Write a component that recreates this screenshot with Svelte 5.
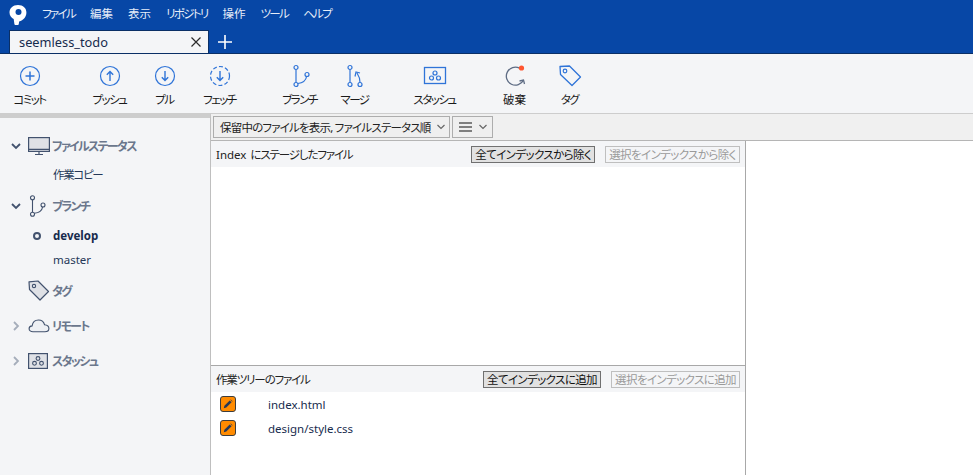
<script>
  const menus = ['ファイル', '編集', '表示', 'リポジトリ', '操作', 'ツール', 'ヘルプ'];
  const groups = [
    [{ id: 'commit', label: 'コミット' }],
    [{ id: 'push', label: 'プッシュ' }, { id: 'pull', label: 'プル' }, { id: 'fetch', label: 'フェッチ' }],
    [{ id: 'branch', label: 'ブランチ' }, { id: 'merge', label: 'マージ' }],
    [{ id: 'stash', label: 'スタッシュ' }],
    [{ id: 'discard', label: '破棄' }, { id: 'tag', label: 'タグ' }]
  ];
  const files = ['index.html', 'design/style.css'];
  // katakana labels are set tighter than the kanji ones
  const isKana = (s) => /[\u30A0-\u30FF]/.test(s);
</script>

<div class="app">
  <header class="top">
    <div class="menubar">
      <svg class="logo" width="20" height="22" viewBox="0 0 20 22">
        <path d="M10 1C4.800 1 1.500 4.200 1.500 8.600c0 3.200 2 5.400 4.200 6.400l.7 5c.1.8.6 1 1.300 1h1.800c.7-.1 1.200-.4 1.300-1.100l.3-2.300c4.300-1.300 7.300-4.500 7.300-9C18.500 4.200 15.200 1 10 1z" fill="#fff" />
        <circle cx="10.500" cy="8" r="3" fill="#0747a6" />
      </svg>
      {#each menus as m}
        <span class="menu" class:kana={isKana(m)}>{m}</span>
      {/each}
    </div>
    <div class="tabbar">
      <div class="tab">
        <span>seemless_todo</span>
        <svg width="10" height="10" viewBox="0 0 10 10"><path d="M.5.500l9 9M9.500.500l-9 9" stroke="#2b2b2b" stroke-width="1.200" fill="none" /></svg>
      </div>
      <svg class="plus" width="14" height="14" viewBox="0 0 14 14"><path d="M7 0v14M0 7h14" stroke="#fff" stroke-width="1.600" /></svg>
    </div>
  </header>

  <nav class="toolbar">
    {#each groups as group}
      <div class="group">
        {#each group as item}
          <div class="tool">
            <svg width="24" height="24" viewBox="0 0 24 24" fill="none" stroke="#2f74d8" stroke-width="1.200">
              {#if item.id === 'commit'}
                <circle cx="12" cy="12" r="9.500" />
                <path d="M12 7.500v9M7.500 12h9" stroke-width="1.500" />
              {:else if item.id === 'push'}
                <circle cx="12" cy="12" r="9.500" />
                <path d="M12 17V7.500M8.800 10.800L12 7.500l3.200 3.300" stroke-width="1.400" />
              {:else if item.id === 'pull'}
                <circle cx="12" cy="12" r="9.500" />
                <path d="M12 7v9.500M8.800 13.200l3.200 3.300 3.200-3.300" stroke-width="1.400" />
              {:else if item.id === 'fetch'}
                <circle cx="12" cy="12" r="9.500" stroke-dasharray="4 2.200" />
                <path d="M12 7v9.500M8.800 13.200l3.200 3.300 3.200-3.300" stroke-width="1.400" />
              {:else if item.id === 'branch'}
                <circle cx="8" cy="3.500" r="2" />
                <circle cx="8" cy="20.500" r="2" />
                <circle cx="19" cy="10.500" r="2" />
                <path d="M8 5.500v13M9.800 19.500c5-.5 8.200-3.500 8.800-7" />
              {:else if item.id === 'merge'}
                <circle cx="7" cy="3.500" r="2" />
                <circle cx="7" cy="20.500" r="2" />
                <circle cx="17" cy="20.500" r="2" />
                <path d="M7 5.500v13M17 18.500c0-4-1-6.500-3-9.500M12 12.500l1-4.500 4 1" />
              {:else if item.id === 'stash'}
                <rect x="1.500" y="3.500" width="21" height="16" stroke-width="1.300" />
                <circle cx="12" cy="9" r="2" />
                <circle cx="8.500" cy="14" r="2" />
                <circle cx="15.500" cy="14" r="2" />
              {:else if item.id === 'discard'}
                <path d="M16.500 4.200A9 9 0 1 0 20.500 16" stroke="#5e6c84" stroke-width="1.300" />
                <path d="M16.500 17l4-1 1 4" stroke="#5e6c84" stroke-width="1.300" />
                <circle cx="18.500" cy="4" r="2.600" fill="#ff5630" stroke="none" />
              {:else if item.id === 'tag'}
                <path d="M2 2.500l9.500-.5 11 11-8.500 8.500-11.500-11z" stroke-width="1.300" stroke-linejoin="round" />
                <circle cx="7" cy="7" r="1.800" />
              {/if}
            </svg>
            <span class:kana={isKana(item.label)}>{item.label}</span>
          </div>
        {/each}
      </div>
    {/each}
  </nav>

  <div class="body">
    <aside class="sidebar">
      <div class="row head">
        <svg class="chev" width="10" height="10" viewBox="0 0 10 10"><path d="M1 3l4 4 4-4" /></svg>
        <svg class="ico" width="22" height="20" viewBox="0 0 22 20" fill="#dfe1e6" stroke="#42526e" stroke-width="1.200">
          <rect x=".6" y="1.600" width="20.800" height="13.800" />
          <path d="M.6 13.400h20.800M7 18.500h8M11 15.500v3" fill="none" />
        </svg>
        <span>ファイルステータス</span>
      </div>
      <div class="row sub first">作業コピー</div>

      <div class="row head">
        <svg class="chev" width="10" height="10" viewBox="0 0 10 10"><path d="M1 3l4 4 4-4" /></svg>
        <svg class="ico" width="22" height="22" viewBox="0 0 22 22" fill="none" stroke="#42526e" stroke-width="1.100">
          <circle cx="4.500" cy="2.800" r="2" />
          <circle cx="4.500" cy="19.200" r="2" />
          <circle cx="15" cy="10" r="2" />
          <path d="M4.500 4.800v12.400M6.300 18.300c4.500-.5 7.800-3 8.300-6.300" />
        </svg>
        <span>ブランチ</span>
      </div>
      <div class="row sub current">
        <span class="dot"></span>
        develop
      </div>
      <div class="row sub">master</div>

      <div class="row head tagrow">
        <svg class="ico" width="22" height="22" viewBox="0 0 22 22" fill="#dfe1e6" stroke="#42526e" stroke-width="1.200" stroke-linejoin="round">
          <path d="M1 1.800L10 1l10.500 10.500-8.500 8.500L1.500 9.500z" />
          <circle cx="6" cy="6" r="1.600" fill="#fff" />
        </svg>
        <span>タグ</span>
      </div>

      <div class="row head closed">
        <svg class="chev right" width="10" height="10" viewBox="0 0 10 10"><path d="M3 1l4 4-4 4" /></svg>
        <svg class="ico" width="22" height="14" viewBox="0 0 22 14" fill="#eef0f4" stroke="#42526e" stroke-width="1.100">
          <path d="M5 12.800c-2.300 0-3.900-1.300-3.900-3 0-1.500 1.200-2.700 3-2.900C4.700 3.400 7.300 1 10.500 1c3 0 5.300 2 6 4.700 2.600.2 4.400 1.800 4.400 3.800 0 1.900-1.700 3.300-4 3.300z" />
        </svg>
        <span>リモート</span>
      </div>

      <div class="row head closed">
        <svg class="chev right" width="10" height="10" viewBox="0 0 10 10"><path d="M3 1l4 4-4 4" /></svg>
        <svg class="ico wide-gap" width="20" height="16" viewBox="0 0 20 16" fill="none" stroke="#42526e" stroke-width="1.100">
          <rect x=".6" y=".6" width="18.800" height="14.800" fill="#dfe1e6" stroke-width="1.200" />
          <circle cx="10" cy="5.500" r="1.900" />
          <circle cx="6.500" cy="10.300" r="1.900" />
          <circle cx="13.500" cy="10.300" r="1.900" />
        </svg>
        <span>スタッシュ</span>
      </div>
    </aside>

    <main class="main">
      <div class="filters">
        <div class="select wide">
          <span>保留中のファイルを表示, ファイルステータス順</span>
          <svg class="caret" width="8" height="6" viewBox="0 0 8 6"><path d="M.5 1L4 4.500 7.500 1" /></svg>
        </div>
        <div class="select narrow">
          <svg width="13" height="10" viewBox="0 0 13 10"><path d="M0 1h13M0 5h13M0 9h13" stroke="#111" stroke-width="1.200" /></svg>
          <svg class="caret" width="8" height="6" viewBox="0 0 8 6"><path d="M.5 1L4 4.500 7.500 1" /></svg>
        </div>
      </div>

      <div class="panes">
        <div class="staging">
          <section class="staged">
            <div class="section-head">
              <span class="title"><span class="latin">Index</span>にステージしたファイル</span>
              <button class="btn">全てインデックスから除く</button>
              <button class="btn off">選択をインデックスから除く</button>
            </div>
          </section>
          <section class="unstaged">
            <div class="section-head">
              <span class="title">作業ツリーのファイル</span>
              <button class="btn">全てインデックスに追加</button>
              <button class="btn off">選択をインデックスに追加</button>
            </div>
            <ul class="files">
              {#each files as f}
                <li>
                  <span class="badge">
                    <svg width="10" height="10" viewBox="0 0 10 10"><path d="M.8 9.200l.6-2.500L6.700 1.400l1.900 1.900-5.300 5.300zM7.300.8l.5-.3 1.700 1.700-.3.500z" fill="#253858" /></svg>
                  </span>
                  <span class="name">{f}</span>
                </li>
              {/each}
            </ul>
          </section>
        </div>
        <div class="detail"></div>
      </div>
    </main>
  </div>
</div>

<style>
  :global(body) {
    margin: 0;
    background: #f4f5f7;
  }
  .app {
    width: 973px;
    height: 475px;
    overflow: hidden;
    display: flex;
    flex-direction: column;
    font-family: "Noto Sans", "Noto Sans CJK JP", sans-serif;
    font-feature-settings: "palt";
    font-size: 11.5px;
    color: #1a1a1a;
  }

  .top {
    height: 54px;
    background: #0747a6;
    flex: none;
    border-bottom: 1px solid #0a2f66;
    box-sizing: border-box;
  }
  .menubar {
    height: 30px;
    display: flex;
    align-items: center;
    padding-left: 8px;
    gap: 15px;
    color: #e6edf8;
  }
  .logo {
    flex: none;
    margin-right: -1px;
  }
  .menu {
    font-size: 11.500px;
    line-height: 1;
    margin-top: -2px;
  }
  .menu.kana {
    letter-spacing: -1.700px;
  }
  .tabbar {
    display: flex;
    align-items: center;
    padding-left: 9px;
    height: 23px;
  }
  .tab {
    width: 200px;
    height: 23px;
    box-sizing: border-box;
    background: #f4f5f7;
    border-top: 1px solid #0a2f66;
    border-left: 1px solid #0a2f66;
    border-right: 1px solid #0a2f66;
    display: flex;
    align-items: center;
    justify-content: space-between;
    padding: 0 7px 0 9px;
    font-size: 12.800px;
    color: #172b4d;
  }
  .plus {
    margin-left: 9px;
  }

  .toolbar {
    height: 59px;
    flex: none;
    display: flex;
    gap: 25px;
    padding-left: 2px;
    background: #f4f5f7;
    box-sizing: border-box;
  }
  .group {
    display: flex;
  }
  .tool {
    width: 55px;
    display: flex;
    flex-direction: column;
    align-items: center;
    padding-top: 10px;
    box-sizing: border-box;
  }
  .tool span {
    font-size: 11.500px;
    line-height: 16px;
    margin-top: 4px;
    white-space: nowrap;
  }
  .tool span.kana {
    letter-spacing: -1.500px;
  }

  .body {
    flex: 1;
    display: flex;
    min-height: 0;
  }
  .sidebar {
    width: 211px;
    flex: none;
    box-sizing: border-box;
    border-right: 1px solid #bfbfbf;
    border-top: 5px solid #cdcdcd;
    padding-top: 17px;
    background: #f4f5f7;
  }
  .row {
    display: flex;
    align-items: center;
    white-space: nowrap;
  }
  .head {
    height: 22px;
    padding-left: 11px;
    color: #6b778c;
    font-weight: 700;
    font-size: 12px;
    letter-spacing: -1.700px;
    margin-bottom: 6px;
  }
  .head .ico {
    margin: 0 2px 0 7px;
    flex: none;
  }
  .head .ico.wide-gap {
    margin-right: 4px;
  }
  .chev {
    fill: none;
    stroke: #42526e;
    stroke-width: 1.800;
    flex: none;
  }
  .chev.right {
    stroke: #a5adba;
  }
  .sub {
    height: 25px;
    padding-left: 53px;
    font-size: 11.500px;
    color: #253858;
    position: relative;
  }
  .sub.first {
    margin-bottom: 9px;
    margin-top: -2px;
    letter-spacing: -1.300px;
  }
  .sub.current {
    height: 24px;
    font-weight: 700;
    color: #172b4d;
  }
  .dot {
    position: absolute;
    left: 33px;
    top: 9px;
    width: 4px;
    height: 4px;
    border: 2px solid #42526e;
    border-radius: 50%;
  }
  .tagrow {
    padding-left: 28px;
    margin-top: 8px;
    margin-bottom: 13px;
  }
  .tagrow .ico {
    margin-left: 0;
  }
  .closed {
    margin-bottom: 13px;
  }

  .main {
    flex: 1;
    min-width: 0;
    display: flex;
    flex-direction: column;
  }
  .filters {
    height: 28px;
    flex: none;
    box-sizing: border-box;
    border-top: 1px solid #cdcdcd;
    border-bottom: 1px solid #b5b5b5;
    background: #f0f0f0;
    display: flex;
    align-items: center;
    gap: 2px;
    padding: 0 0 0 2px;
  }
  .select {
    height: 22px;
    box-sizing: border-box;
    border: 1px solid #adadad;
    background: #efefef;
    display: flex;
    align-items: center;
    justify-content: space-between;
    font-size: 11.500px;
    color: #222;
  }
  .wide {
    width: 237px;
    padding: 0 4px 0 6px;
  }
  .narrow {
    width: 41px;
    padding: 0 5px 0 6px;
  }
  .select span {
    white-space: nowrap;
    letter-spacing: -0.800px;
  }
  .caret {
    fill: none;
    stroke: #666;
    stroke-width: 1.200;
    flex: none;
  }

  .panes {
    flex: 1;
    display: flex;
    min-height: 0;
  }
  .staging {
    width: 535px;
    flex: none;
    box-sizing: border-box;
    border-right: 1px solid #a8a8a8;
    display: flex;
    flex-direction: column;
  }
  .detail {
    flex: 1;
    background: #fff;
  }
  section {
    background: #fff;
  }
  .staged {
    height: 224px;
    flex: none;
    border-bottom: 1px solid #a8a8a8;
  }
  .unstaged {
    flex: 1;
  }
  .section-head {
    height: 26px;
    background: #f4f5f7;
    display: flex;
    align-items: center;
    padding: 0 5px;
    gap: 10px;
  }
  .title {
    margin-right: auto;
    font-size: 11.500px;
    color: #222;
    white-space: nowrap;
    letter-spacing: -1.150px;
  }
  .latin {
    letter-spacing: 0;
    margin-right: 4px;
  }
  button {
    font: inherit;
    font-size: 11.500px;
    font-feature-settings: "palt";
    letter-spacing: -0.600px;
    height: 17px;
    line-height: 15px;
    padding: 0 3px;
    box-sizing: border-box;
    border: 1px solid #707070;
    background: #e1e1e1;
    color: #111;
    white-space: nowrap;
    border-radius: 0;
  }
  .off {
    border-color: #bfbfbf;
    background: #f4f5f7;
    color: #9a9a9a;
  }
  .files {
    list-style: none;
    margin: 0;
    padding: 0 0 0 9px;
  }
  .files li {
    height: 24px;
    display: flex;
    align-items: center;
  }
  .badge {
    width: 16px;
    height: 16px;
    box-sizing: border-box;
    border: 1px solid #3d3d3d;
    border-radius: 3px;
    background: #ff8b00;
    display: flex;
    align-items: center;
    justify-content: center;
    flex: none;
  }
  .name {
    margin-left: 32px;
    font-size: 11.500px;
    color: #172b4d;
  }
</style>
